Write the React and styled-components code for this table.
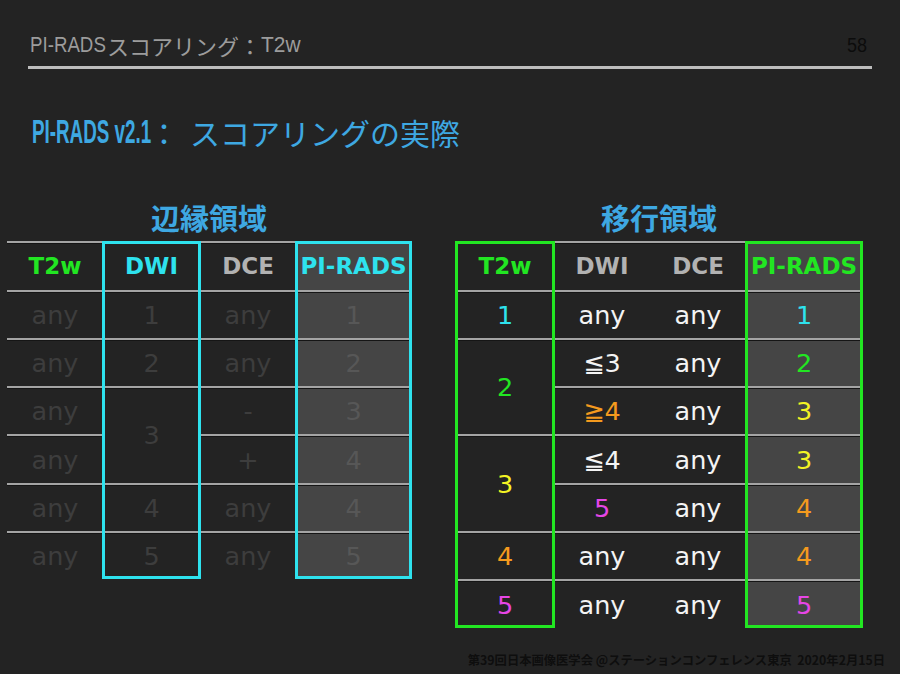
import React from 'react';
import styled, { createGlobalStyle } from 'styled-components';

const GlobalStyle = createGlobalStyle`
  html, body { margin: 0; padding: 0; background: #232323; }
  body { font-family: "DejaVu Sans", "Noto Sans CJK JP", sans-serif; }
`;

const COLORS = {
  green: '#22e622',
  cyan: '#2ee2ee',
  gray: '#b2b2b2',
  white: '#f4f4f4',
  yellow: '#f2f224',
  orange: '#f49a1e',
  magenta: '#e646e6',
  dim: '#3d3d3d',
  dimShade: '#575757',
};

const Slide = styled.div`
  width: 900px;
  height: 674px;
  background: #232323;
  display: flex;
  flex-direction: column;
  overflow: hidden;
`;

const Header = styled.header`
  display: flex;
  justify-content: space-between;
  align-items: center;
  height: 24px;
  margin: 33px 32px 0 30px;
  font-family: "Noto Sans CJK JP", sans-serif;
  font-size: 22px;
  color: #9c9c9c;
  white-space: nowrap;
`;

const HeaderTitle = styled.div`
  display: flex;
  align-items: center;
`;

const PageNo = styled.div`
  color: #0c0c0c;
  font-family: "Liberation Sans", sans-serif;
  font-size: 20px;
  transform: scaleX(0.9);
`;

const Narrow = styled.span`
  display: inline-block;
  width: ${(p) => p.$w}px;
  white-space: nowrap;
  font-family: "Liberation Sans", sans-serif;
  font-size: ${(p) => (p.$size ? `${p.$size}px` : 'inherit')};
  font-weight: ${(p) => (p.$bold ? 700 : 400)};
  transform: scaleX(${(p) => p.$sx});
  transform-origin: 0 50%;
`;

const Rule = styled.div`
  height: 2.5px;
  margin: 9px 28px 0 28px;
  background: #bdbdbd;
`;

const Title = styled.h1`
  margin: 43px 0 0 32px;
  height: 40px;
  display: flex;
  align-items: center;
  font-family: "Noto Sans CJK JP", sans-serif;
  font-weight: 400;
  font-size: 30px;
  color: #3ea8e2;
  white-space: nowrap;
`;

const Colon = styled.span`
  display: inline-block;
  width: 41px;
`;

const Tables = styled.div`
  display: flex;
  gap: 45px;
  margin: 47px 0 0 7px;
  align-items: flex-start;
`;

const Section = styled.section`
  display: flex;
  flex-direction: column;
  align-items: center;
`;

const Zone = styled.h2`
  margin: 0 0 6px;
  height: 36px;
  line-height: 36px;
  font-family: "Noto Sans CJK JP", sans-serif;
  font-weight: 700;
  font-size: 29px;
  color: #3ea8e2;
`;

const Grid = styled.div`
  display: grid;
  grid-template-columns: ${(p) => p.$cols};
  grid-template-rows: 49px repeat(${(p) => p.$rows}, 48.33px);
`;

const Cell = styled.div`
  grid-column: ${(p) => p.$c};
  grid-row: ${(p) => p.$r} / span ${(p) => p.$span || 1};
  display: flex;
  align-items: center;
  justify-content: center;
  border-top: 2px solid #a4a4a4;
  box-shadow: inset 0 1px 0 #151515;
  background: ${(p) => (p.$shade ? '#454545' : 'transparent')};
  color: ${(p) => COLORS[p.$tone]};
  font-family: "DejaVu Sans", "Noto Sans CJK JP", sans-serif;
  font-size: ${(p) => (p.$head ? '23px' : '25.5px')};
  font-weight: ${(p) => (p.$head ? 700 : 400)};
  white-space: nowrap;
`;

const Box = styled.div`
  grid-column: ${(p) => p.$c};
  grid-row: 1 / -1;
  margin: 0 -1px;
  border: 3px solid ${(p) => COLORS[p.$tone]};
  pointer-events: none;
  z-index: 1;
`;

const Footer = styled.footer`
  margin-top: auto;
  margin-bottom: 5px;
  align-self: flex-end;
  margin-right: 15px;
  font-family: "Noto Sans CJK JP", sans-serif;
  font-weight: 700;
  font-size: 12.3px;
  color: #0e0e0e;
  white-space: pre;
`;

const leftCells = [
  { r: 1, c: 1, t: 'T2w', tone: 'green', head: true },
  { r: 1, c: 2, t: 'DWI', tone: 'cyan', head: true },
  { r: 1, c: 3, t: 'DCE', tone: 'gray', head: true },
  { r: 1, c: 4, t: 'PI-RADS', tone: 'cyan', head: true, shade: true },
  ...[2, 3, 4, 5, 6, 7].map((r) => ({ r, c: 1, t: 'any', tone: 'dim' })),
  { r: 2, c: 2, t: '1', tone: 'dim' },
  { r: 3, c: 2, t: '2', tone: 'dim' },
  { r: 4, c: 2, t: '3', tone: 'dim', span: 2 },
  { r: 6, c: 2, t: '4', tone: 'dim' },
  { r: 7, c: 2, t: '5', tone: 'dim' },
  { r: 2, c: 3, t: 'any', tone: 'dim' },
  { r: 3, c: 3, t: 'any', tone: 'dim' },
  { r: 4, c: 3, t: '-', tone: 'dim' },
  { r: 5, c: 3, t: '+', tone: 'dim' },
  { r: 6, c: 3, t: 'any', tone: 'dim' },
  { r: 7, c: 3, t: 'any', tone: 'dim' },
  ...['1', '2', '3', '4', '4', '5'].map((t, i) => ({ r: i + 2, c: 4, t, tone: 'dimShade', shade: true })),
];

const rightCells = [
  { r: 1, c: 1, t: 'T2w', tone: 'green', head: true },
  { r: 1, c: 2, t: 'DWI', tone: 'gray', head: true },
  { r: 1, c: 3, t: 'DCE', tone: 'gray', head: true },
  { r: 1, c: 4, t: 'PI-RADS', tone: 'green', head: true, shade: true },
  { r: 2, c: 1, t: '1', tone: 'cyan' },
  { r: 3, c: 1, t: '2', tone: 'green', span: 2 },
  { r: 5, c: 1, t: '3', tone: 'yellow', span: 2 },
  { r: 7, c: 1, t: '4', tone: 'orange' },
  { r: 8, c: 1, t: '5', tone: 'magenta' },
  { r: 2, c: 2, t: 'any', tone: 'white' },
  { r: 3, c: 2, t: '≦3', tone: 'white' },
  { r: 4, c: 2, t: '≧4', tone: 'orange' },
  { r: 5, c: 2, t: '≦4', tone: 'white' },
  { r: 6, c: 2, t: '5', tone: 'magenta' },
  { r: 7, c: 2, t: 'any', tone: 'white' },
  { r: 8, c: 2, t: 'any', tone: 'white' },
  ...[2, 3, 4, 5, 6, 7, 8].map((r) => ({ r, c: 3, t: 'any', tone: 'white' })),
  ...[
    ['1', 'cyan'],
    ['2', 'green'],
    ['3', 'yellow'],
    ['3', 'yellow'],
    ['4', 'orange'],
    ['4', 'orange'],
    ['5', 'magenta'],
  ].map(([t, tone], i) => ({ r: i + 2, c: 4, t, tone, shade: true })),
];

function ScoreTable({ title, cols, rows, cells, boxes }) {
  return (
    <Section>
      <Zone>{title}</Zone>
      <Grid $cols={cols} $rows={rows}>
        {cells.map((cell, i) => (
          <Cell
            key={i}
            $r={cell.r}
            $c={cell.c}
            $span={cell.span}
            $tone={cell.tone}
            $head={cell.head}
            $shade={cell.shade}
          >
            {cell.t}
          </Cell>
        ))}
        {boxes.map((b) => (
          <Box key={b.c} $c={b.c} $tone={b.tone} />
        ))}
      </Grid>
    </Section>
  );
}

export default function App() {
  return (
    <>
      <GlobalStyle />
      <Slide>
        <Header>
          <HeaderTitle>
            <Narrow $w={77} $sx={0.85}>PI-RADS</Narrow>
            スコアリング：
            <Narrow $w={40} $sx={0.95}>T2w</Narrow>
          </HeaderTitle>
          <PageNo>58</PageNo>
        </Header>
        <Rule />
        <Title>
          <Narrow $w={117} $sx={0.57} $size={33} $bold>PI-RADS v2.1</Narrow>
          <Colon>：</Colon>
          スコアリングの実際
        </Title>
        <Tables>
          <ScoreTable
            title="辺縁領域"
            cols="96px 97px 96px 115px"
            rows={6}
            cells={leftCells}
            boxes={[
              { c: 2, tone: 'cyan' },
              { c: 4, tone: 'cyan' },
            ]}
          />
          <ScoreTable
            title="移行領域"
            cols="98px 96px 96px 116px"
            rows={7}
            cells={rightCells}
            boxes={[
              { c: 1, tone: 'green' },
              { c: 4, tone: 'green' },
            ]}
          />
        </Tables>
        <Footer>第39回日本画像医学会 @ステーションコンフェレンス東京  2020年2月15日</Footer>
      </Slide>
    </>
  );
}
